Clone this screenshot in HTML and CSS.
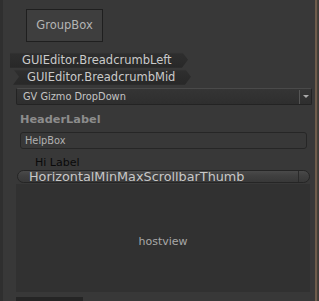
FILE: index.html
```html
<!DOCTYPE html>
<html>

<head>
	<link rel="stylesheet" href="styles.css">
</head>

<body>
	<div class="window">
		<div class="panel">
			<div class="group-box">GroupBox</div>

			<div class="crumb crumb-left">GUIEditor.BreadcrumbLeft</div>
			<div class="crumb crumb-mid">GUIEditor.BreadcrumbMid</div>

			<div class="dropdown">
				<span class="dropdown-label">GV Gizmo DropDown</span>
				<span class="dropdown-arrow"></span>
			</div>

			<div class="header-label">HeaderLabel</div>
			<div class="help-box">HelpBox</div>
			<div class="hi-label">Hi Label</div>

			<div class="thumb">
				<span class="thumb-label">HorizontalMinMaxScrollbarThumb</span>
				<span class="thumb-end"></span>
			</div>

			<div class="hostview">hostview</div>
			<div class="footer-tab"></div>
		</div>
		<div class="edge"></div>
	</div>
</body>

</html>
```

FILE: styles.css
```css
* {
	box-sizing: border-box;
	margin: 0;
	padding: 0;
}

body {
	background: #383838;
	font-family: 'DejaVu Sans', 'Liberation Sans', sans-serif;
	width: 319px;
	height: 301px;
	overflow: hidden;
}

.window {
	display: flex;
	height: 301px;
}

.panel {
	flex: 1;
	display: flex;
	flex-direction: column;
	align-items: flex-start;
	border-left: 3px solid #2f2f2f;
	background: #383838;
}

.edge {
	width: 4px;
	background: linear-gradient(90deg, #6e5c4b 0, #6e5c4b 2px, #4a4038 2px, #3a3a3a 100%);
}

/* GroupBox */
.group-box {
	margin: 9px 0 0 23px;
	width: 77px;
	height: 33px;
	border: 1px solid #1f1f1f;
	background: #3e3e3e;
	color: #b4b4b4;
	font-size: 11.5px;
	display: flex;
	justify-content: center;
	align-items: center;
}

/* Breadcrumbs */
.crumb {
	height: 16px;
	color: #cacaca;
	font-size: 11.5px;
	line-height: 16px;
	background: linear-gradient(180deg, #3a3a3a 0, #2e2e2e 2px, #282828 100%);
	white-space: nowrap;
}

.crumb-left {
	margin: 10px 0 0 7px;
	width: 178px;
	padding-left: 12px;
	clip-path: polygon(0 0, calc(100% - 6px) 0, 100% 50%, calc(100% - 6px) 100%, 0 100%);
}

.crumb-mid {
	margin: 1px 0 0 10px;
	width: 178px;
	padding-left: 14px;
	clip-path: polygon(0 0, calc(100% - 6px) 0, 100% 50%, calc(100% - 6px) 100%, 0 100%, 6px 50%);
}

/* Dropdown */
.dropdown {
	margin: 3px 0 0 13px;
	width: 296px;
	height: 18px;
	border: 1px solid #232323;
	border-top-color: #4a4a4a;
	border-radius: 2px;
	background: linear-gradient(180deg, #353535 0, #2e2e2e 100%);
	display: flex;
	align-items: center;
}

.dropdown-label {
	flex: 1;
	padding-left: 6px;
	color: #c4c4c4;
	font-size: 9.8px;
}

.dropdown-arrow {
	width: 12px;
	height: 14px;
	border-left: 1px solid #555;
	position: relative;
}

.dropdown-arrow::after {
	content: "";
	position: absolute;
	left: 3px;
	top: 5px;
	border-left: 3px solid transparent;
	border-right: 3px solid transparent;
	border-top: 3px solid #aaa;
}

/* Labels */
.header-label {
	margin: 8px 0 0 17px;
	color: #8c8c8c;
	font-size: 11.3px;
	font-weight: bold;
	line-height: 14px;
}

.help-box {
	margin: 5px 0 0 17px;
	width: 287px;
	height: 17px;
	border: 1px solid #262626;
	border-radius: 3px;
	background: #383838;
	color: #b0b0b0;
	font-size: 9.8px;
	line-height: 15px;
	padding-left: 4px;
}

.hi-label {
	margin: 7px 0 0 32px;
	color: #0a0a0a;
	font-size: 11px;
	line-height: 13px;
}

/* Scrollbar thumb */
.thumb {
	margin: 1px 0 0 14px;
	width: 293px;
	height: 13px;
	border: 1px solid #252525;
	border-radius: 7px;
	background: linear-gradient(180deg, #4a4a4a 0, #404040 40%, #383838 100%);
	display: flex;
	align-items: center;
	overflow: hidden;
}

.thumb-label {
	flex: 1;
	padding-left: 11px;
	color: #c8c8c8;
	font-size: 12.8px;
	line-height: 11px;
	white-space: nowrap;
}

.thumb-end {
	width: 11px;
	height: 100%;
	border-left: 1px solid #2a2a2a;
}

/* Hostview */
.hostview {
	margin: 1px 0 0 13px;
	width: 294px;
	height: 109px;
	padding-top: 6px;
	background: #313131;
	color: #a8a8a8;
	font-size: 11px;
	display: flex;
	justify-content: center;
	align-items: center;
}

.footer-tab {
	margin: 5px 0 0 13px;
	width: 67px;
	height: 4px;
	background: #252525;
}
```
